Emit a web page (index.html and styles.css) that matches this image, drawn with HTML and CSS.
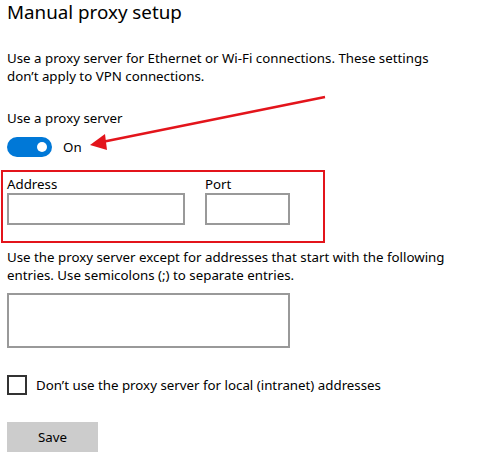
FILE: index.html
```html
<!DOCTYPE html>
<html lang="en">
<head>
    <meta charset="UTF-8">
    <meta name="viewport" content="width=device-width, initial-scale=1.0">
    <title>Manual proxy setup</title>
    <link rel="stylesheet" href="styles.css">
</head>
<body>

<div class="page">
    <h1>Manual proxy setup</h1>

    <p class="intro">Use a proxy server for Ethernet or Wi-Fi connections. These settings<br>don’t apply to VPN connections.</p>

    <div class="setting-label">Use a proxy server</div>
    <div class="toggle-row">
        <span class="toggle"><span class="knob"></span></span>
        <span>On</span>
    </div>

    <div class="highlight">
        <div class="field">
            <label>Address</label>
            <input type="text" class="address">
        </div>
        <div class="field">
            <label>Port</label>
            <input type="text" class="port">
        </div>
    </div>

    <p class="except">Use the proxy server except for addresses that start with the following<br>entries. Use semicolons (;) to separate entries.</p>
    <textarea class="exceptions"></textarea>

    <div class="check-row">
        <span class="checkbox"></span>
        <span>Don’t use the proxy server for local (intranet) addresses</span>
    </div>

    <button class="save-btn">Save</button>

    <!-- annotation arrow pointing at the toggle -->
    <svg class="arrow" width="480" height="466" viewBox="0 0 480 466">
        <line x1="325" y1="97" x2="102" y2="142" stroke="#e3141b" stroke-width="2.5"/>
        <polygon points="90,145 105,134 107,150" fill="#e3141b"/>
    </svg>
</div>

</body>
</html>
```

FILE: styles.css
```css
body {
    margin: 0;
    background-color: #fff;
    color: #000;
    font-family: "Noto Sans", "Open Sans", sans-serif;
    font-size: 13.3px;
    line-height: 18px;
}
.page {
    position: relative;
    padding: 0 7px;
    height: 466px;
    box-sizing: border-box;
}
h1 {
    margin: 0;
    padding-top: 1px;
    font-size: 18.8px;
    font-weight: 400;
    line-height: 23px;
}
.intro {
    margin: 25px 0 0;
}
.setting-label {
    margin-top: 24px;
}
.toggle-row {
    display: flex;
    align-items: center;
    gap: 11px;
    height: 20px;
    margin-top: 10px;
    line-height: 20px;
}
.toggle {
    display: flex;
    align-items: center;
    justify-content: flex-end;
    width: 45px;
    height: 20px;
    padding-right: 5px;
    box-sizing: border-box;
    border-radius: 10px;
    background-color: #0078d7;
}
.knob {
    width: 10px;
    height: 10px;
    border-radius: 50%;
    background-color: #fff;
}
.highlight {
    display: flex;
    gap: 20px;
    width: 324px;
    height: 73px;
    margin: 13px 0 0 -6px;
    padding: 3px 4px 0;
    box-sizing: border-box;
    border: 2px solid #e3141b;
}
.field {
    display: flex;
    flex-direction: column;
}
.field input {
    height: 32px;
    margin: 0;
    padding: 0;
    box-sizing: border-box;
    border: 2px solid #999;
    font: inherit;
}
.address {
    width: 178px;
}
.port {
    width: 85px;
}
.except {
    margin: 5px 0 0;
}
.exceptions {
    display: block;
    width: 283px;
    height: 55px;
    margin-top: 9px;
    padding: 0;
    box-sizing: border-box;
    border: 2px solid #999;
    resize: none;
    font: inherit;
}
.check-row {
    display: flex;
    align-items: center;
    gap: 9px;
    height: 20px;
    margin-top: 27px;
    line-height: 20px;
}
.checkbox {
    width: 20px;
    height: 20px;
    box-sizing: border-box;
    border: 2px solid #333;
}
.save-btn {
    display: block;
    width: 91px;
    height: 30px;
    margin-top: 27px;
    padding: 0;
    border: none;
    background-color: #ccc;
    color: #000;
    font: inherit;
}
.arrow {
    position: absolute;
    left: 0;
    top: 0;
    pointer-events: none;
}
```
